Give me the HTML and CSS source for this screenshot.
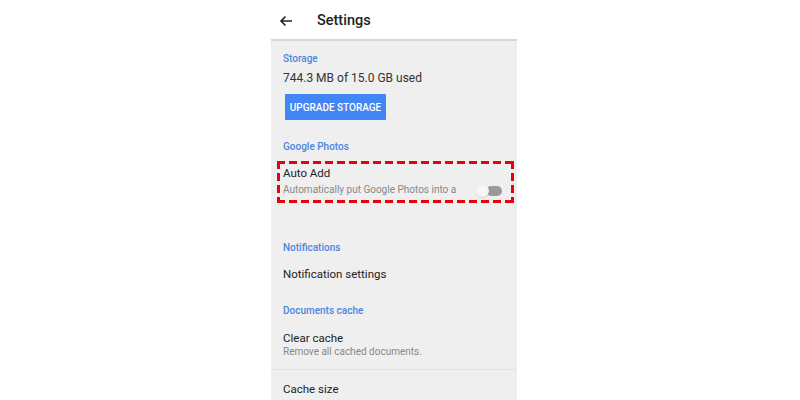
FILE: index.html
```html
<!DOCTYPE html>
<html lang="en">
<head>
    <meta charset="UTF-8">
    <title>Settings</title>
    <link rel="stylesheet" href="styles.css">
</head>
<body>
    <div class="phone">
        <div class="topbar">
            <svg class="back" width="14" height="12" viewBox="0 0 14 12">
                <path d="M13 6H2M6.5 1.5L2 6l4.5 4.5" fill="none" stroke="#222" stroke-width="1.6"/>
            </svg>
            <span class="title">Settings</span>
        </div>

        <div class="content">
            <div class="section storage">
                <div class="label">Storage</div>
                <div class="used">744.3 MB of 15.0 GB used</div>
                <button class="upgrade-btn">UPGRADE STORAGE</button>
            </div>

            <div class="section photos">
                <div class="label">Google Photos</div>
                <div class="highlight">
                    <div class="item-title">Auto Add</div>
                    <div class="item-row">
                        <span class="item-sub">Automatically put Google Photos into a</span>
                        <span class="toggle"><span class="thumb"></span></span>
                    </div>
                </div>
            </div>

            <div class="section notif">
                <div class="label">Notifications</div>
                <div class="item-title">Notification settings</div>
            </div>

            <div class="section cache">
                <div class="label">Documents cache</div>
                <div class="item-title">Clear cache</div>
                <div class="item-sub">Remove all cached documents.</div>
            </div>

            <div class="section size">
                <div class="item-title">Cache size</div>
            </div>
        </div>
    </div>
</body>
</html>
```

FILE: styles.css
```css
body {
    margin: 0;
    background-color: #ffffff;
    font-family: Roboto, 'Liberation Sans', sans-serif;
    color: #222;
}
.phone {
    width: 246px;
    margin-left: 271px;
    height: 400px;
    overflow: hidden;
}
.topbar {
    height: 37px;
    padding-top: 2px;
    display: flex;
    align-items: center;
    background-color: #fff;
    border-bottom: 2px solid #d6d6d6;
}
.back {
    margin-left: 8px;
}
.title {
    margin-left: 24px;
    font-size: 14.5px;
    font-weight: 500;
    color: #222;
}
.content {
    background-color: #efefef;
    height: 360px;
}
.section {
    padding: 0 12px;
}
.label {
    font-size: 10px;
    color: #4a86e0;
    font-weight: 500;
}
.storage {
    padding-top: 12px;
}
.used {
    font-size: 12px;
    color: #333;
    margin-top: 7px;
}
.upgrade-btn {
    margin: 9px 0 0 2px;
    background-color: #4285f4;
    color: #fff;
    border: none;
    border-radius: 1px;
    font-family: Roboto, 'Liberation Sans', sans-serif;
    font-size: 10px;
    font-weight: 500;
    white-space: nowrap;
    padding: 0;
    height: 26px;
    width: 101px;
    display: block;
}
.photos {
    padding-top: 21px;
}
.highlight {
    margin: 9px -9px 0 -6px;
    padding: 5px 12px 5px 6px;
    height: 32px;
    background-image:
        repeating-linear-gradient(90deg, #e8000b 0 8px, transparent 8px 12px),
        repeating-linear-gradient(90deg, #e8000b 0 8px, transparent 8px 12px),
        repeating-linear-gradient(180deg, #e8000b 0 8px, transparent 8px 12px),
        repeating-linear-gradient(180deg, #e8000b 0 8px, transparent 8px 12px);
    background-size: 100% 3px, 100% 3px, 3px 100%, 3px 100%;
    background-position: top left, bottom left, top left, top right;
    background-repeat: no-repeat;
}
.item-title {
    font-size: 11.5px;
    color: #222;
}
.item-sub {
    font-size: 10px;
    color: #888;
}
.item-row {
    display: flex;
    justify-content: space-between;
    align-items: center;
    margin-top: 2px;
}
.toggle {
    position: relative;
    width: 16px;
    height: 10px;
    background-color: #9a9a9a;
    border-radius: 5px;
    margin-top: 4px;
}
.thumb {
    position: absolute;
    left: -10px;
    top: -1px;
    width: 13px;
    height: 12px;
    border-radius: 50%;
    background-color: #f7f7f7;
    box-shadow: 0 1px 1px rgba(0,0,0,0.12);
}
.notif {
    padding-top: 39px;
}
.notif .item-title {
    margin-top: 14px;
}
.cache {
    padding-top: 24px;
    padding-bottom: 12px;
    border-bottom: 1px solid #e2e2e2;
}
.cache .item-title {
    margin-top: 15px;
}
.cache .item-sub {
    margin-top: 1px;
}
.size {
    padding-top: 12px;
}
```
